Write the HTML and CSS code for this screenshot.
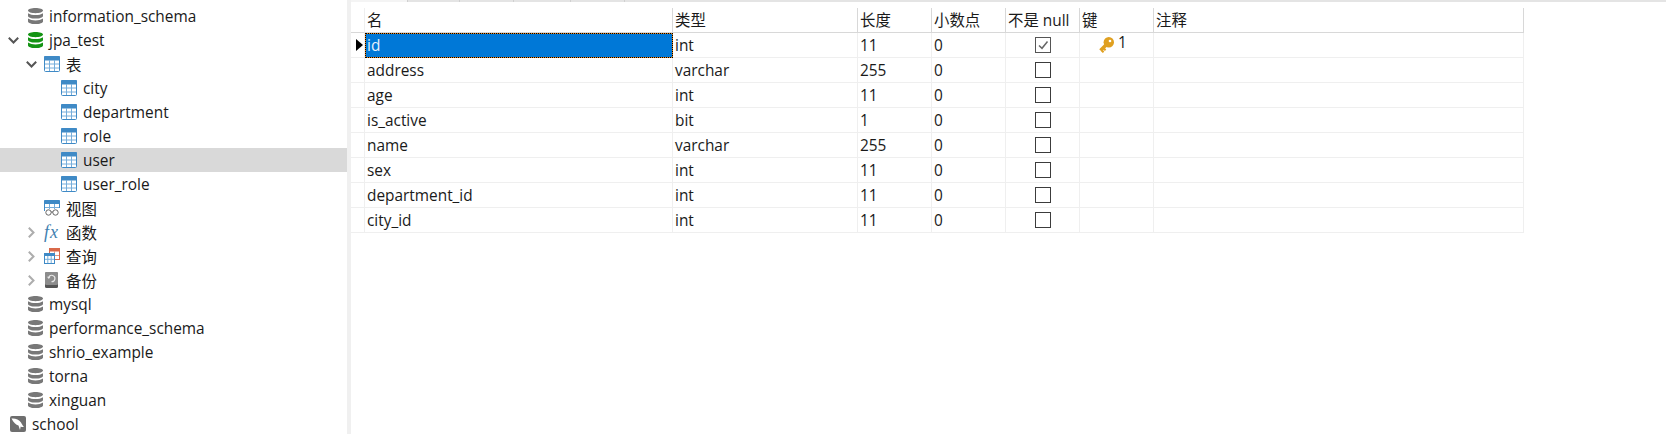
FILE: index.html
```html
<!DOCTYPE html>
<html lang="en">
<head>
    <meta charset="UTF-8">
    <title>jpa_test - user</title>
    <link rel="stylesheet" href="styles.css">
</head>
<body>

<svg class="defs" width="0" height="0">
    <symbol id="db" viewBox="0 0 15 16">
        <path d="M0 2.6C0 1 3.4 0 7.5 0S15 1 15 2.6 11.6 5.2 7.5 5.2 0 4.200 0 2.600z"/>
        <path d="M0 5.200C2 6.600 4.500 7 7.500 7s5.500-.4 7.500-1.800V8c0 1.500-3.400 2.600-7.500 2.600S0 9.500 0 8z"/>
        <path d="M0 10.600C2 12 4.500 12.400 7.500 12.400s5.500-.4 7.500-1.800v2.800c0 1.500-3.400 2.600-7.500 2.600S0 14.900 0 13.400z"/>
    </symbol>
    <symbol id="table" viewBox="0 0 16 16">
        <rect x="0.500" y="0.500" width="15" height="15" rx="1" fill="#fff" stroke="#3f8ac6"/>
        <rect x="0" y="0" width="16" height="4.500" rx="1" fill="#3f8ac6"/>
        <path d="M5.500 4v11M10.500 4v11M1 8h14M1 12h14" stroke="#76aedb" fill="none"/>
    </symbol>
    <symbol id="chev-down" viewBox="0 0 11 7">
        <path d="M.8.800 5.500 5.500 10.200.8" fill="none" stroke="#555" stroke-width="2"/>
    </symbol>
    <symbol id="chev-right" viewBox="0 0 7 11">
        <path d="M.8.800 5.500 5.500.8 10.200" fill="none" stroke="#adadad" stroke-width="2"/>
    </symbol>
</svg>

<div class="app">
    <div class="tree">
        <div class="row lvl1"><span class="caret"></span><svg class="ico-db"><use href="#db"/></svg><span>edu_order_demo</span></div>
        <div class="row lvl1"><span class="caret"></span><svg class="ico-db"><use href="#db"/></svg><span>information_schema</span></div>
        <div class="row lvl1"><span class="caret"><svg class="chev-d"><use href="#chev-down"/></svg></span><svg class="ico-db open"><use href="#db"/></svg><span>jpa_test</span></div>
        <div class="row lvl2"><span class="caret"><svg class="chev-d"><use href="#chev-down"/></svg></span><svg class="ico"><use href="#table"/></svg><span>表</span></div>
        <div class="row lvl3"><svg class="ico"><use href="#table"/></svg><span>city</span></div>
        <div class="row lvl3"><svg class="ico"><use href="#table"/></svg><span>department</span></div>
        <div class="row lvl3"><svg class="ico"><use href="#table"/></svg><span>role</span></div>
        <div class="row lvl3 active"><svg class="ico"><use href="#table"/></svg><span>user</span></div>
        <div class="row lvl3"><svg class="ico"><use href="#table"/></svg><span>user_role</span></div>
        <div class="row lvl2"><span class="caret"></span>
            <svg class="ico" viewBox="0 0 16 16">
                <path d="M.5 11V1.500q0-1 1-1h13q1 0 1 1V8" fill="#fff" stroke="#3f8ac6"/>
                <rect x="0" y="0" width="16" height="4" rx="1" fill="#3f8ac6"/>
                <path d="M5.500 4v5M10.500 4v5M1 7.500h14" stroke="#76aedb" fill="none"/>
                <circle cx="4.500" cy="12.500" r="2.700" fill="#fff" stroke="#666"/>
                <circle cx="11.500" cy="12.500" r="2.700" fill="#fff" stroke="#666"/>
                <path d="M7 12h2" stroke="#666"/>
            </svg><span>视图</span></div>
        <div class="row lvl2"><span class="caret"><svg class="chev-r"><use href="#chev-right"/></svg></span><span class="ico fx">fx</span><span>函数</span></div>
        <div class="row lvl2"><span class="caret"><svg class="chev-r"><use href="#chev-right"/></svg></span>
            <svg class="ico" viewBox="0 0 16 16">
                <rect x="5.500" y="0.500" width="10" height="11" fill="#fff" stroke="#d9694a"/>
                <rect x="5" y="0" width="11" height="3.500" fill="#d9694a"/>
                <path d="M10.500 3v8M6 7.500h9" stroke="#e39a85" fill="none"/>
                <rect x="0.500" y="5.500" width="10" height="10" fill="#fff" stroke="#3f8ac6"/>
                <rect x="0" y="5" width="11" height="3" fill="#3f8ac6"/>
                <path d="M3.800 8v7M7.200 8v7M1 11.300h9" stroke="#76aedb" fill="none"/>
            </svg><span>查询</span></div>
        <div class="row lvl2"><span class="caret"><svg class="chev-r"><use href="#chev-right"/></svg></span>
            <svg class="ico" viewBox="0 0 16 16">
                <rect x="1" y="0" width="13" height="16" rx="1.500" fill="#555"/>
                <rect x="1" y="0" width="13" height="13" rx="1.500" fill="#8c8c8c"/>
                <path d="M4.800 5.200A3.200 3.200 0 1 1 7.500 9.700" fill="none" stroke="#e8e8e8" stroke-width="1.200"/>
                <path d="M3 4.800h3.500L4.800 7z" fill="#e8e8e8"/>
            </svg><span>备份</span></div>
        <div class="row lvl1"><span class="caret"></span><svg class="ico-db"><use href="#db"/></svg><span>mysql</span></div>
        <div class="row lvl1"><span class="caret"></span><svg class="ico-db"><use href="#db"/></svg><span>performance_schema</span></div>
        <div class="row lvl1"><span class="caret"></span><svg class="ico-db"><use href="#db"/></svg><span>shrio_example</span></div>
        <div class="row lvl1"><span class="caret"></span><svg class="ico-db"><use href="#db"/></svg><span>torna</span></div>
        <div class="row lvl1"><span class="caret"></span><svg class="ico-db"><use href="#db"/></svg><span>xinguan</span></div>
        <div class="row lvl0">
            <svg class="ico" viewBox="0 0 16 16">
                <rect width="16" height="16" rx="2" fill="#6e6e6e"/>
                <path d="M1.500 2.500C5 2 9 3.500 11 6.500c1 1.500 1.500 3 3 4.500-1.500.3-2.500 0-3.300-.6L10 14 8.500 9.500C6 9 3.500 6.500 1.500 2.500z" fill="#fff"/>
            </svg><span>school</span></div>
    </div>

    <div class="splitter"></div>

    <div class="pane">
        <div class="tabs">
            <span class="tab first"></span><span class="tab w52"></span><span class="tab w54"></span><span class="tab w57"></span><span class="tab w54"></span>
        </div>
        <div class="grid">
            <div class="gr head">
                <div class="c"></div><div class="c">名</div><div class="c">类型</div><div class="c">长度</div><div class="c">小数点</div><div class="c">不是 null</div><div class="c">键</div><div class="c">注释</div>
            </div>
            <div class="gr">
                <div class="c marker"><span class="arrow"></span></div><div class="c current">id</div><div class="c">int</div><div class="c">11</div><div class="c">0</div><div class="c check"><span class="box on"><svg width="12" height="12" viewBox="0 0 12 12"><path d="M2 6.500 5 9.300 10.500 2.500" fill="none" stroke="#666" stroke-width="1.500"/></svg></span></div>
                <div class="c keycell"><svg class="key" viewBox="0 0 15 16"><path d="M7.500 7.500 1.500 13.500" stroke="#e0a020" stroke-width="3.500" fill="none"/><path d="M3 13.500l1.500 1.800M5 11.500l1.500 1.800" stroke="#e0a020" stroke-width="2" fill="none"/><circle cx="9.800" cy="5.200" r="5.200" fill="#e0a020"/><circle cx="11" cy="4" r="1.300" fill="#fff"/></svg><span class="keynum">1</span></div><div class="c"></div>
            </div>
            <div class="gr">
                <div class="c"></div><div class="c">address</div><div class="c">varchar</div><div class="c">255</div><div class="c">0</div><div class="c check"><span class="box"></span></div><div class="c"></div><div class="c"></div>
            </div>
            <div class="gr">
                <div class="c"></div><div class="c">age</div><div class="c">int</div><div class="c">11</div><div class="c">0</div><div class="c check"><span class="box"></span></div><div class="c"></div><div class="c"></div>
            </div>
            <div class="gr">
                <div class="c"></div><div class="c">is_active</div><div class="c">bit</div><div class="c">1</div><div class="c">0</div><div class="c check"><span class="box"></span></div><div class="c"></div><div class="c"></div>
            </div>
            <div class="gr">
                <div class="c"></div><div class="c">name</div><div class="c">varchar</div><div class="c">255</div><div class="c">0</div><div class="c check"><span class="box"></span></div><div class="c"></div><div class="c"></div>
            </div>
            <div class="gr">
                <div class="c"></div><div class="c">sex</div><div class="c">int</div><div class="c">11</div><div class="c">0</div><div class="c check"><span class="box"></span></div><div class="c"></div><div class="c"></div>
            </div>
            <div class="gr">
                <div class="c"></div><div class="c">department_id</div><div class="c">int</div><div class="c">11</div><div class="c">0</div><div class="c check"><span class="box"></span></div><div class="c"></div><div class="c"></div>
            </div>
            <div class="gr">
                <div class="c"></div><div class="c">city_id</div><div class="c">int</div><div class="c">11</div><div class="c">0</div><div class="c check"><span class="box"></span></div><div class="c"></div><div class="c"></div>
            </div>
        </div>
    </div>
</div>

</body>
</html>
```

FILE: styles.css
```css
html, body {
    margin: 0;
    height: 100%;
    overflow: hidden;
    background-color: #fff;
}

body {
    font-family: "Open Sans", "Noto Sans CJK SC", sans-serif;
    font-size: 15.4px;
    color: #1a1a1a;
}

.defs {
    position: absolute;
}

.app {
    display: flex;
    height: 434px;
}

/* left tree */
.tree {
    width: 347px;
    flex: none;
    margin-top: -20px;
}

.row {
    display: flex;
    align-items: center;
    height: 24px;
    box-sizing: border-box;
    white-space: nowrap;
}

.row.active {
    background-color: #d9d9d9;
}

.lvl0 { padding-left: 10px; }
.lvl1 { padding-left: 8px; }
.lvl2 { padding-left: 26px; }
.lvl3 { padding-left: 61px; }

.lvl1 .caret { width: 20px; }
.lvl2 .caret { width: 18px; }

.caret {
    flex: none;
    display: flex;
    align-items: center;
}

.chev-d {
    width: 11px;
    height: 7px;
}

.chev-r {
    width: 7px;
    height: 11px;
    margin-left: 2px;
}

.ico {
    width: 16px;
    height: 16px;
    flex: none;
    margin-right: 6px;
}

.ico-db {
    width: 15px;
    height: 16px;
    flex: none;
    margin-right: 6px;
    fill: #787878;
}

.ico-db.open {
    fill: #149414;
}

.fx {
    font-family: "Liberation Serif", serif;
    font-style: italic;
    font-size: 18px;
    line-height: 16px;
    color: #3f7fb0;
    letter-spacing: 1px;
}

.splitter {
    width: 4px;
    flex: none;
    background-color: #f0f0f0;
}

/* right pane */
.pane {
    flex: 1;
}

.tabs {
    display: flex;
    height: 2px;
    background-color: #e4e4e4;
}

.tab {
    height: 2px;
    border-right: 1px solid #d0d0d0;
    box-sizing: border-box;
}

.tab.first { width: 57px; background-color: #f4f4f4; }
.tab.w52 { width: 52px; }
.tab.w54 { width: 54px; }
.tab.w57 { width: 57px; }

.grid {
    margin-top: 6px;
}

.gr {
    display: grid;
    grid-template-columns: 14px 308px 185px 74px 74px 74px 74px 370px;
    height: 25px;
}

.c {
    box-sizing: border-box;
    border-right: 1px solid #efefef;
    border-bottom: 1px solid #efefef;
    padding: 0 0 0 2px;
    line-height: 26px;
    white-space: nowrap;
    overflow: hidden;
}

.head .c {
    border-right-color: #d8d8d8;
    border-bottom-color: #d8d8d8;
}

.head .c:first-child {
    border-right-color: #efefef;
}

.marker {
    display: flex;
    align-items: center;
    padding: 0 0 0 5px;
}

.arrow {
    width: 0;
    height: 0;
    border-left: 7px solid #000;
    border-top: 6px solid transparent;
    border-bottom: 6px solid transparent;
}

.current {
    background: linear-gradient(#0078d7, #0078d7) padding-box, #e8861c border-box;
    border: 1px dotted #000;
    padding-left: 1px;
    line-height: 24px;
    color: #e6f1fb;
}

.check {
    display: flex;
    align-items: center;
    justify-content: center;
    padding: 0;
}

.box {
    display: flex;
    align-items: center;
    justify-content: center;
    width: 16px;
    height: 16px;
    box-sizing: border-box;
    border: 1px solid #3c3c3c;
    background-color: #fff;
}

.box.on {
    border-color: #555;
}

.keycell {
    display: flex;
    align-items: center;
    padding-left: 19px;
}

.key {
    width: 15px;
    height: 16px;
    flex: none;
}

.keynum {
    margin: -5px 0 0 4px;
}
```
